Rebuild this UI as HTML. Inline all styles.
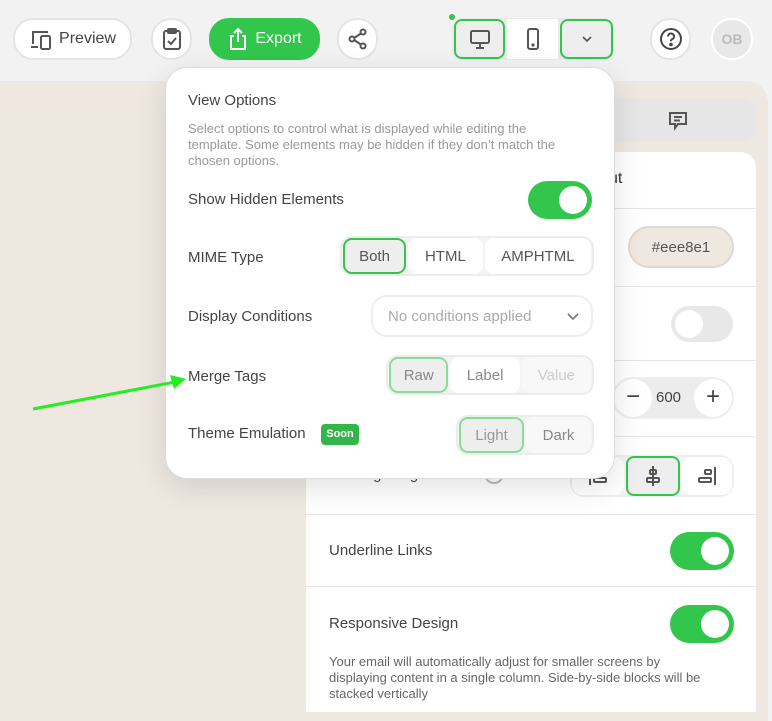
<!DOCTYPE html>
<html><head><style>
*{box-sizing:border-box;margin:0;padding:0}
body{width:772px;height:707px;overflow:hidden;background:#f2f2f2;font-family:"Liberation Sans",sans-serif;position:relative;color:#444}
.a{position:absolute}
.btn{position:absolute;background:#fff;border:2px solid #e4e4e4;border-radius:20px;display:flex;align-items:center;justify-content:center}
.canvas{left:0;top:81px;width:768px;height:640px;background:#eee8e1;border-radius:0 22px 0 0}
.tabs{left:306px;top:98px;width:450px;height:44px;background:#e6e6e6;border-radius:12px}
.panel{left:306px;top:152px;width:450px;height:560px;background:#fff;border-radius:0 16px 0 0}
.line{position:absolute;left:0;right:0;height:1px;background:#e6e6e6}
.tog{position:absolute;width:64px;height:38px;border-radius:19px;background:#33c64d}
.tog::after{content:"";position:absolute;right:5px;top:5px;width:28px;height:28px;border-radius:50%;background:#fff}
.pop{left:165px;top:67px;width:450px;height:412px;background:#fff;border:1px solid #ddd;border-radius:22px;box-shadow:0 8px 30px rgba(0,0,0,.12)}
.lbl{position:absolute;left:22px;font-size:15px;color:#444}
.seg{position:absolute;display:flex;background:#f4f4f4;border:2px solid #ececec;border-radius:12px;height:40px;padding:0}
.seg div{display:flex;align-items:center;justify-content:center;font-size:15px;color:#555;background:#fff;border-radius:9px;margin:0 1px}
.seg .on{background:#eee;border:2px solid #33c64d}
</style></head><body>
<div class="a canvas"></div>
<div class="a tabs"></div>
<svg class="a" style="left:667px;top:110px" width="22" height="22" viewBox="0 0 22 22" fill="none" stroke="#555" stroke-width="2"><path d="M3 3h16v11h-8l-3 4v-4H3z"/><path d="M7 7h8M7 10.5h6"/></svg>
<div class="a panel">
 <div class="a" style="left:303px;top:18px;font-size:16px;color:#333">ut</div>
 <div class="line" style="top:56px"></div>
 <div class="a" style="left:322px;top:74px;width:106px;height:42px;border-radius:21px;background:#eee8e1;border:2px solid #e0d9d0;font-size:15px;display:flex;align-items:center;justify-content:center;color:#555">#eee8e1</div>
 <div class="line" style="top:134px"></div>
 <div class="a" style="left:365px;top:154px;width:62px;height:36px;border-radius:18px;background:#e8e8e8"><div class="a" style="left:4px;top:4px;width:28px;height:28px;border-radius:50%;background:#fff"></div></div>
 <div class="line" style="top:208px"></div>
 <div class="a" style="left:306px;top:225px;width:122px;height:42px;border-radius:21px;background:#ececec;border:2px solid #eee"></div>
 <div class="a" style="left:308px;top:227px;width:38px;height:38px;border-radius:19px;background:#fff;text-align:center;font-size:24px;line-height:36px;color:#444">−</div>
 <div class="a" style="left:350px;top:237px;font-size:15px;color:#444">600</div>
 <div class="a" style="left:388px;top:227px;width:38px;height:38px;border-radius:19px;background:#fff;text-align:center;font-size:24px;line-height:36px;color:#444">+</div>
 <div class="line" style="top:284px"></div>
 <div class="a" style="left:23px;top:314px;font-size:15px;color:#444">Message Alignment</div>
 <div class="a" style="left:178px;top:312px;width:20px;height:20px;border-radius:50%;border:2px solid #bbb"></div>
 <div class="a" style="left:264px;top:303px;width:164px;height:42px;border-radius:14px;background:#f4f4f4;border:2px solid #eee"></div>
 <div class="a" style="left:266px;top:305px;width:52px;height:38px;border-radius:10px;background:#fff"></div>
 <svg class="a" style="left:280px;top:312px" width="24" height="24" viewBox="0 0 24 24" fill="none" stroke="#555" stroke-width="2"><path d="M4 3v18"/><rect x="8" y="6" width="6" height="4" rx="1"/><rect x="8" y="14" width="12" height="4" rx="1"/></svg>
 <div class="a" style="left:320px;top:304px;width:54px;height:40px;border-radius:8px;background:#eee;border:2px solid #33c64d"></div>
 <svg class="a" style="left:335px;top:312px" width="24" height="24" viewBox="0 0 24 24" fill="none" stroke="#555" stroke-width="2"><path d="M12 2v20"/><rect x="9" y="6" width="6" height="4" rx="1"/><rect x="6" y="14" width="12" height="4" rx="1"/></svg>
 <div class="a" style="left:376px;top:305px;width:50px;height:38px;border-radius:10px;background:#fff"></div>
 <svg class="a" style="left:389px;top:312px" width="24" height="24" viewBox="0 0 24 24" fill="none" stroke="#555" stroke-width="2"><path d="M20 3v18"/><rect x="10" y="6" width="6" height="4" rx="1"/><rect x="4" y="14" width="12" height="4" rx="1"/></svg>
 <div class="line" style="top:362px"></div>
 <div class="a" style="left:23px;top:390px;font-size:15px">Underline Links</div>
 <div class="tog" style="left:364px;top:380px"></div>
 <div class="line" style="top:434px"></div>
 <div class="a" style="left:23px;top:463px;font-size:15px">Responsive Design</div>
 <div class="tog" style="left:364px;top:453px"></div>
 <div class="a" style="left:23px;top:502px;width:378px;font-size:13px;line-height:16px;color:#666">Your email will automatically adjust for smaller screens by displaying content in a single column. Side-by-side blocks will be stacked vertically</div>
</div>
<!-- toolbar -->
<div class="btn" style="left:13px;top:18px;width:119px;height:42px"><svg width="24" height="24" viewBox="0 0 24 24" fill="none" stroke="#555" stroke-width="2"><path d="M4 17V5h15"/><path d="M2 20h7"/><rect x="12" y="9" width="9" height="13" rx="1.5"/></svg><span style="font-size:16px;color:#444;margin-left:6px">Preview</span></div>
<div class="btn" style="left:151px;top:18px;width:41px;height:42px"><svg width="22" height="24" viewBox="0 0 22 24" fill="none" stroke="#555" stroke-width="2"><rect x="3" y="4" width="16" height="18" rx="2"/><rect x="7" y="2" width="8" height="4" rx="1"/><path d="M7 14l3 3 5-6"/></svg></div>
<div class="btn" style="left:209px;top:18px;width:111px;height:42px;background:#33c64d;border-color:#33c64d"><svg width="22" height="24" viewBox="0 0 22 24" fill="none" stroke="#fff" stroke-width="2"><path d="M7 9H4v13h14V9h-3M11 15V2M7 6l4-4 4 4"/></svg><span style="font-size:16px;color:#fff;margin-left:6px">Export</span></div>
<div class="btn" style="left:337px;top:18px;width:41px;height:42px"><svg width="22" height="22" viewBox="0 0 22 22" fill="none" stroke="#555" stroke-width="2"><circle cx="16" cy="4" r="2.5"/><circle cx="5" cy="11" r="2.5"/><circle cx="16" cy="18" r="2.5"/><path d="M7 10l7-4.5M7 12l7 4.5"/></svg></div>
<div class="a" style="left:449px;top:14px;width:6px;height:6px;border-radius:50%;background:#33c64d"></div>
<div class="a" style="left:452px;top:18px;width:162px;height:42px;border-radius:10px;background:#eaeaea"></div>
<div class="a" style="left:454px;top:19px;width:51px;height:40px;border-radius:8px;border:2px solid #33c64d;background:#eee;display:flex;align-items:center;justify-content:center"><svg width="22" height="22" viewBox="0 0 22 22" fill="none" stroke="#555" stroke-width="2"><rect x="2" y="3" width="18" height="12" rx="1.5"/><path d="M11 15v4M7 20h8"/></svg></div>
<div class="a" style="left:507px;top:19px;width:51px;height:40px;background:#fff;display:flex;align-items:center;justify-content:center"><svg width="14" height="24" viewBox="0 0 14 24" fill="none" stroke="#555" stroke-width="2"><rect x="2" y="2" width="10" height="20" rx="2"/><circle cx="7" cy="18" r=".6" fill="#555"/></svg></div>
<div class="a" style="left:560px;top:19px;width:53px;height:40px;border-radius:8px;border:2px solid #33c64d;background:#eee;display:flex;align-items:center;justify-content:center"><svg width="12" height="8" viewBox="0 0 12 8" fill="none" stroke="#555" stroke-width="1.6"><path d="M2 2l4 4 4-4"/></svg></div>
<div class="btn" style="left:650px;top:18px;width:41px;height:42px"><svg width="24" height="24" viewBox="0 0 24 24" fill="none" stroke="#444" stroke-width="2"><circle cx="12" cy="12" r="10"/><path d="M9 9.5a3 3 0 1 1 4 2.8c-.8.4-1 1-1 2"/><circle cx="12" cy="17.5" r=".8" fill="#444"/></svg></div>
<div class="btn" style="left:711px;top:18px;width:42px;height:42px;background:#e8e8e8;border-color:#fff;font-size:14px;font-weight:bold;color:#bbb">OB</div>
<!-- popover -->
<div class="a pop">
 <div class="a" style="left:22px;top:24px;font-size:15px;color:#444">View Options</div>
 <div class="a" style="left:22px;top:53px;width:390px;font-size:13px;line-height:16px;color:#999">Select options to control what is displayed while editing the template. Some elements may be hidden if they don’t match the chosen options.</div>
 <div class="lbl" style="top:123px">Show Hidden Elements</div>
 <div class="tog" style="left:362px;top:113px"></div>
 <div class="lbl" style="top:181px">MIME Type</div>
 <div class="seg" style="left:174px;top:168px;width:254px"><div class="on" style="width:64px">Both</div><div style="width:76px">HTML</div><div style="width:108px">AMPHTML</div></div>
 <div class="lbl" style="top:240px">Display Conditions</div>
 <div class="a" style="left:205px;top:227px;width:222px;height:42px;border:2px solid #eee;border-radius:16px;font-size:15px;color:#aaa;padding:11px 0 0 15px">No conditions applied<svg class="a" style="right:12px;top:16px" width="12" height="8" viewBox="0 0 12 8" fill="none" stroke="#777" stroke-width="1.6"><path d="M1 1l5 5 5-5"/></svg></div>
 <div class="lbl" style="top:300px">Merge Tags</div>
 <div class="seg" style="left:220px;top:287px;width:208px"><div class="on" style="width:60px;color:#888;border-color:#88dd99">Raw</div><div style="width:70px;color:#888">Label</div><div style="width:70px;color:#ccc;background:#f8f8f8">Value</div></div>
 <div class="lbl" style="top:357px">Theme Emulation</div>
 <div class="a" style="left:155px;top:356px;width:38px;height:21px;border-radius:4px;background:#33b54a;color:#fff;font-size:11px;font-weight:bold;text-align:center;line-height:21px">Soon</div>
 <div class="seg" style="left:290px;top:347px;width:138px"><div class="on" style="width:66px;color:#999;border-color:#88dd99">Light</div><div style="width:66px;color:#888;background:#f8f8f8">Dark</div></div>
</div>
<!-- arrow -->
<svg class="a" style="left:30px;top:365px" width="160" height="50"><path d="M3 44 L145 17" stroke="#22ee22" stroke-width="3"/><path d="M156 14 L140 10 L144 24z" fill="#22ee22"/></svg>
</body></html>
